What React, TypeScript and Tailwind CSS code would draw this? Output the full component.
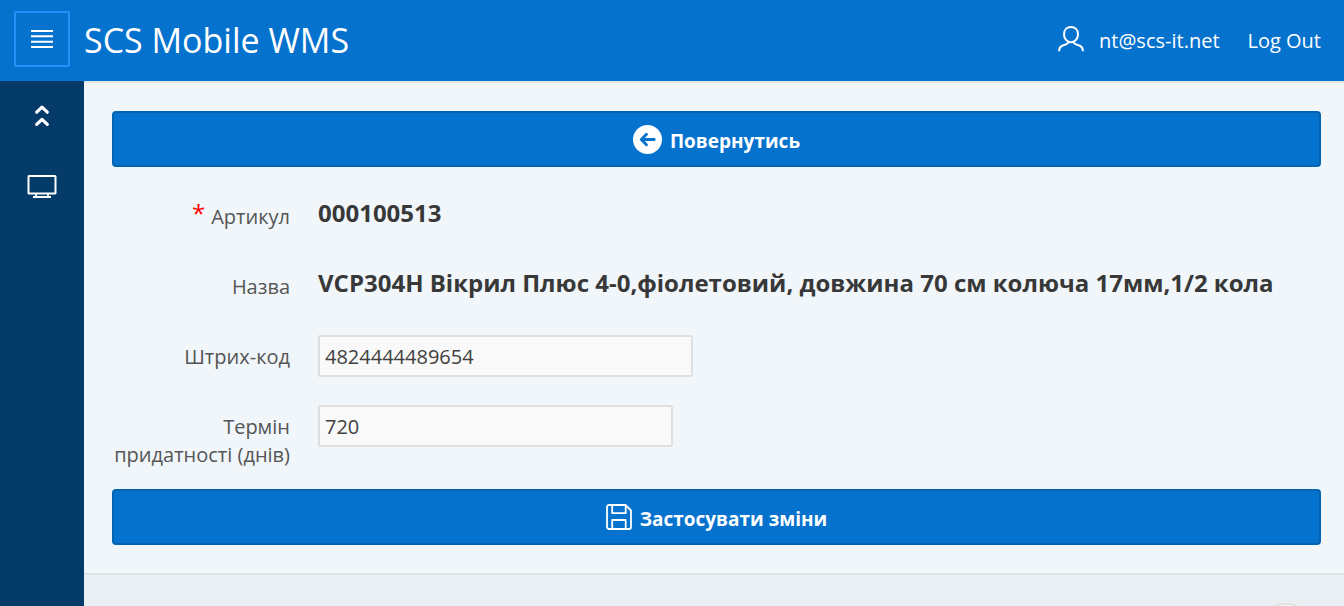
import * as React from "react";

interface FieldProps {
  label: string;
  htmlFor?: string;
  required?: boolean;
  children: React.ReactNode;
}

const MenuIcon = () => (
  <svg className="h-[22px] w-[22px]" viewBox="0 0 22 22" fill="currentColor" aria-hidden="true">
    <path d="M0 2h22v2H0zM0 7.300h22v2H0zM0 12.700h22v2H0zM0 18h22v2H0z" />
  </svg>
);

const CollapseIcon = () => (
  <svg
    className="h-7 w-7"
    viewBox="0 0 28 28"
    fill="none"
    stroke="currentColor"
    strokeWidth="3.200"
    strokeLinecap="round"
    strokeLinejoin="round"
    aria-hidden="true"
  >
    <path d="M8.700 10.200 14 5.200l5.300 5M8.700 22.400 14 17.400l5.300 5" />
  </svg>
);

const DesktopIcon = () => (
  <svg className="h-7 w-[30px]" viewBox="0 0 30 28" fill="none" stroke="currentColor" aria-hidden="true">
    <rect x="1.500" y="4" width="27" height="17.500" rx="0.5" strokeWidth="2" />
    <path d="M9 21.500v3M21 21.500v3" strokeWidth="1.800" />
    <path d="M6 25h18" strokeWidth="2" />
  </svg>
);

const UserIcon = () => (
  <svg
    className="h-7 w-7"
    viewBox="0 0 28 28"
    fill="none"
    stroke="currentColor"
    strokeWidth="2"
    strokeLinecap="round"
    aria-hidden="true"
  >
    <path d="M14 2c-4.100 0-7 2.900-7 7.200 0 4.300 3 8 7 8s7-3.700 7-8c0-4.300-2.900-7.200-7-7.200Z" />
    <path d="M11.500 16.700c-.2 1.300-.8 1.900-2 2.400l-4.300 1.600c-2 .8-3 2.300-3 4.800M16.500 16.700c.2 1.300.8 1.900 2 2.400l4.300 1.600c2 .8 3 2.300 3 4.800" />
  </svg>
);

const BackIcon = () => (
  <svg className="h-[29px] w-[29px]" viewBox="0 0 28 28" aria-hidden="true">
    <circle cx="14" cy="14" r="14" fill="currentColor" />
    <path
      d="M20.500 14H8.500M13 9 8 14l5 5"
      fill="none"
      stroke="#0572ce"
      strokeWidth="2.800"
      strokeLinecap="round"
      strokeLinejoin="round"
    />
  </svg>
);

const SaveIcon = () => (
  <svg
    className="h-[26px] w-[26px]"
    viewBox="0 0 26 26"
    fill="none"
    stroke="currentColor"
    strokeWidth="1.800"
    strokeLinejoin="round"
    aria-hidden="true"
  >
    <path d="M3 1h16.500L25 6.500V23a2 2 0 0 1-2 2H3a2 2 0 0 1-2-2V3a2 2 0 0 1 2-2Z" />
    <path d="M6.200 1v8.200h13.500V1M6.200 25v-9h13.500v9" />
  </svg>
);

const ActionButton: React.FunctionComponent<{ icon: React.ReactNode; children: React.ReactNode }> = ({
  icon,
  children,
}) => (
  <button
    type="button"
    className="flex h-14 w-full items-center justify-center gap-2 rounded-sm border-2 border-[#0464b4] bg-[#0572ce] text-[19px] font-bold text-white"
  >
    {icon}
    <span className="pt-1">{children}</span>
  </button>
);

const Field: React.FunctionComponent<FieldProps> = ({ label, htmlFor, required, children }) => {
  const text = (
    <>
      {required && <span className="mr-1.5 align-top text-[24px] leading-5 text-[#ff0000]">*</span>}
      {label}
    </>
  );

  return (
    <div className="flex items-start gap-7">
      <div className="w-[178px] shrink-0 pt-2 text-right text-[20px] leading-7 text-[#555]">
        {htmlFor ? <label htmlFor={htmlFor}>{text}</label> : <span>{text}</span>}
      </div>
      <div className="min-w-0 grow">{children}</div>
    </div>
  );
};

const App: React.FunctionComponent = () => {
  const [barcode, setBarcode] = React.useState("4824444489654");
  const [shelfLife, setShelfLife] = React.useState("720");

  return (
    <div className="flex h-screen flex-col overflow-hidden bg-[#f0f6fa] font-['Open_Sans','Noto_Sans',sans-serif]">
      <header className="flex h-[81px] shrink-0 items-center justify-between bg-[#0572ce] pr-[23px] pb-[3px] pl-3.5 text-white">
        <div className="flex items-center gap-3.5">
          <button
            type="button"
            aria-label="Menu"
            className="flex size-14 items-center justify-center rounded-xs border-2 border-[#2491f9]"
          >
            <MenuIcon />
          </button>
          <a href="#" className="pt-0.5 text-[34px] leading-none">
            SCS Mobile WMS
          </a>
        </div>
        <nav className="flex items-center gap-7 text-[20px]">
          <a href="#" className="flex items-center gap-3.5">
            <UserIcon />
            <span className="pt-1">nt@scs-it.net</span>
          </a>
          <a href="#" className="pt-1">
            Log Out
          </a>
        </nav>
      </header>

      <div className="flex min-h-0 grow">
        <aside className="flex w-[84px] shrink-0 flex-col items-center bg-[#043b69] text-white">
          <button type="button" aria-label="Collapse" className="flex h-[70px] w-full items-center justify-center">
            <CollapseIcon />
          </button>
          <a href="#" aria-label="Desktop" className="flex h-[70px] w-full items-center justify-center">
            <DesktopIcon />
          </a>
        </aside>

        <div className="flex min-w-0 grow flex-col">
          <main className="border-t-2 border-[#e0e6ea] py-7 pr-[23px] pl-7">
            <ActionButton icon={<BackIcon />}>Повернутись</ActionButton>

            <form className="flex flex-col gap-7 pt-7 pb-5">
              <Field label="Артикул" required>
                <p className="h-[42px] text-[24px] leading-9 font-bold text-[#383838]">000100513</p>
              </Field>
              <Field label="Назва">
                <p className="h-[42px] text-[24px] leading-9 font-bold text-[#383838]">
                  VCP304H Вікрил Плюс 4-0,фіолетовий, довжина 70 см колюча 17мм,1/2 кола
                </p>
              </Field>
              <Field label="Штрих-код" htmlFor="barcode">
                <input
                  id="barcode"
                  type="text"
                  value={barcode}
                  onChange={(e) => setBarcode(e.target.value)}
                  className="block h-[42px] w-[375px] rounded-xs border-2 border-[#dfdfdf] bg-[#f9f9f9] px-[5px] text-[20px] text-[#404040]"
                />
              </Field>
              <Field label="Термін придатності (днів)" htmlFor="shelf-life">
                <input
                  id="shelf-life"
                  type="text"
                  value={shelfLife}
                  onChange={(e) => setShelfLife(e.target.value)}
                  className="block h-[42px] w-[355px] rounded-xs border-2 border-[#dfdfdf] bg-[#f9f9f9] px-[5px] text-[20px] text-[#404040]"
                />
              </Field>
            </form>

            <ActionButton icon={<SaveIcon />}>Застосувати зміни</ActionButton>
          </main>

          <footer className="flex grow justify-end border-t-2 border-[#dfe4e7] bg-[#eaeff3] pt-7 pr-[30px]">
            <button
              type="button"
              aria-label="Top"
              className="size-14 shrink-0 rounded-full border-2 border-[#e2e3e5] bg-[#fbfbfb]"
            />
          </footer>
        </div>
      </div>
    </div>
  );
};

export default App;
